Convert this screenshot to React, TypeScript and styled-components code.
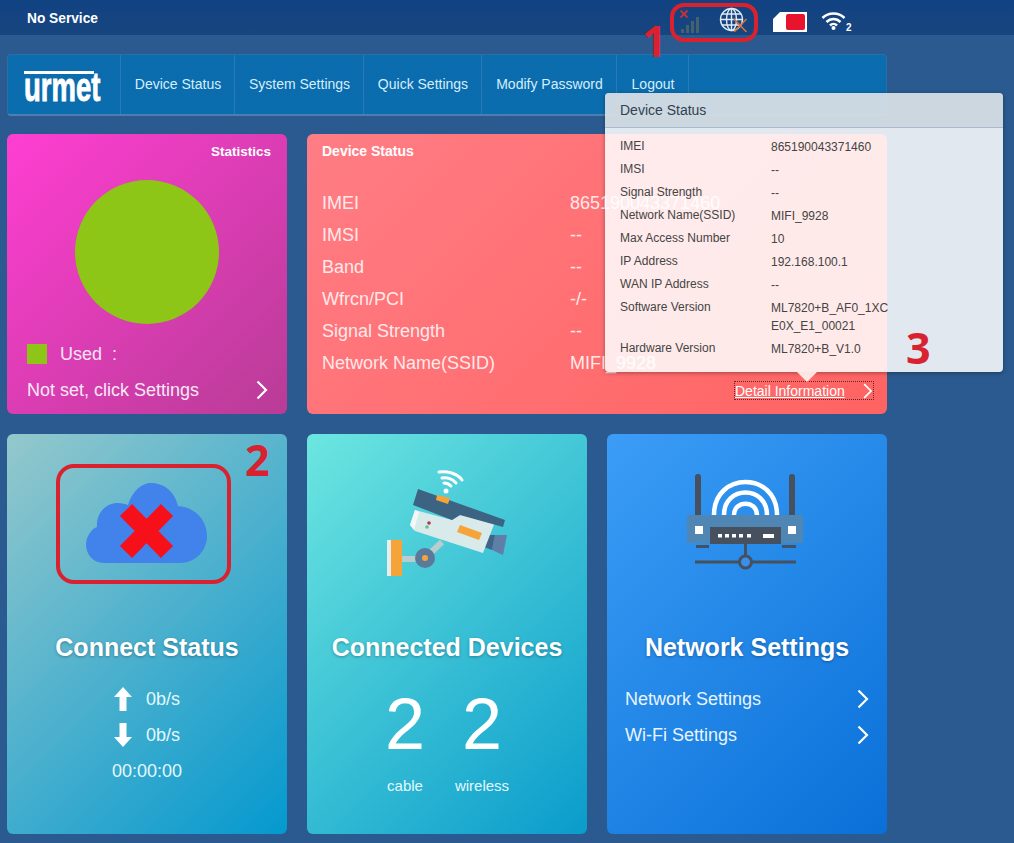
import React from 'react';
import styled, { createGlobalStyle } from 'styled-components';

const GlobalStyle = createGlobalStyle`
  html, body {
    margin: 0;
    padding: 0;
    background: #2a5a90;
    font-family: "Liberation Sans", Arial, sans-serif;
  }
  #root { height: 843px; overflow: hidden; }
`;

const Page = styled.div`
  position: relative;
  width: 1014px;
  height: 843px;
  overflow: hidden;
  background: #2a5a90;
  color: #fff;
`;

// top status bar
const TopBar = styled.div`
  height: 35px;
  display: flex;
  align-items: center;
  padding-left: 27px;
  background: linear-gradient(#114282, #17457f);
`;

const NoService = styled.div`
  width: 653px;
  font-size: 14px;
  font-weight: bold;
  transform: scaleX(0.98);
  transform-origin: left center;
`;

const StatusIcons = styled.div`
  display: flex;
  align-items: center;
`;

const Main = styled.div`
  width: 880px;
  margin-left: 7px;
  padding-top: 19px;
`;

// navigation
const Nav = styled.div`
  height: 62px;
  box-sizing: border-box;
  display: flex;
  background: linear-gradient(#0b6cae, #0a6dae);
  border-radius: 4px;
  border: 1px solid #2a6ea8;
  border-bottom: 2px solid #4c7fae;
`;

const LogoCell = styled.div`
  width: 113px;
  box-sizing: border-box;
  border-right: 1px solid #2a7ab5;
  padding: 15px 0 0 16px;
`;

const Logo = styled.div`
  position: relative;
  color: #fff;
  font-family: "Liberation Sans", sans-serif;
  font-weight: bold;
  font-size: 41px;
  line-height: 30px;
  height: 30px;
  width: 70px;
  white-space: nowrap;
  -webkit-text-stroke: 0.9px #fff;
  &::before {
    content: '';
    position: absolute;
    left: 0;
    right: 0;
    top: 1px;
    height: 3px;
    background: #fff;
  }
  & span {
    display: inline-block;
    padding-top: 2px;
    transform: scaleX(0.67);
    transform-origin: left center;
  }
`;

const NavItem = styled.div<{ $w: number }>`
  width: ${p => p.$w}px;
  box-sizing: border-box;
  display: flex;
  align-items: center;
  justify-content: center;
  font-size: 14px;
  padding: 0 0 1px 1px;
  color: #d4eefb;
  border-right: 1px solid #2a7ab5;
`;

// card grid
const Grid = styled.div`
  margin-top: 18px;
  display: grid;
  grid-template-columns: 280px 280px 280px;
  grid-template-rows: 280px 400px;
  gap: 20px;
`;

const Card = styled.div<{ $from: string; $to: string; $span?: number }>`
  position: relative;
  box-sizing: border-box;
  border-radius: 6px;
  grid-column: span ${p => p.$span ?? 1};
  background: linear-gradient(135deg, ${p => p.$from}, ${p => p.$to});
  display: flex;
  flex-direction: column;
`;

const StatsCard = styled(Card)`
  padding: 10px 0 0 20px;
`;

const CardTitle = styled.div<{ $right?: boolean }>`
  font-size: ${p => (p.$right ? '13.500px' : '14px')};
  font-weight: bold;
  line-height: 15px;
  text-align: ${p => (p.$right ? 'right' : 'left')};
  padding-right: ${p => (p.$right ? '16px' : '0')};
`;

const Donut = styled.div`
  width: 144px;
  height: 144px;
  border-radius: 50%;
  background: #8dc616;
  margin: 21px 0 0 48px;
`;

const UsedRow = styled.div`
  display: flex;
  align-items: center;
  margin-top: 20px;
  font-size: 18px;
  height: 20px;
  color: #f6e6f4;
`;

const Swatch = styled.div`
  width: 20px;
  height: 20px;
  background: #8dc616;
  margin-right: 13px;
`;

const SettingsRow = styled.div`
  display: flex;
  justify-content: space-between;
  align-items: center;
  margin-top: 15px;
  height: 22px;
  padding-right: 19px;
  font-size: 18px;
  color: #f8e8f5;
`;

const DeviceCard = styled(Card)`
  padding: 10px 0 0 15px;
`;

const InfoList = styled.div`
  margin-top: 28px;
  font-size: 18px;
  color: #ffe9e9;
`;

const InfoRow = styled.div`
  display: grid;
  grid-template-columns: 248px 1fr;
  height: 32px;
  line-height: 32px;
`;

const DetailLink = styled.div`
  position: absolute;
  right: 14px;
  bottom: 15px;
  height: 17px;
  width: 138px;
  box-sizing: border-box;
  display: flex;
  justify-content: space-between;
  align-items: center;
  font-size: 14px;
  color: #fff;
  text-decoration: underline;
  outline: 1px dotted #5a2a2a;
`;

const ActionCard = styled(Card)`
  align-items: center;
`;

const IconSlot = styled.div`
  height: 180px;
  width: 100%;
  display: flex;
  justify-content: center;
  align-items: flex-start;
`;

const BigTitle = styled.div`
  font-size: 25px;
  line-height: 28px;
  font-weight: bold;
  margin-top: 19px;
  text-shadow: 0 1px 3px rgba(0, 0, 0, 0.3);
`;

const RateRow = styled.div`
  display: flex;
  align-items: center;
  height: 36px;
  font-size: 18px;
  color: #e4f8fc;
  gap: 14px;
`;

const Rates = styled.div`
  margin-top: 20px;
  display: flex;
  flex-direction: column;
  align-items: center;
`;

const Counts = styled.div`
  margin: 27px 7px 0 0;
  display: flex;
  gap: 27px;
`;

const Count = styled.div`
  width: 50px;
  display: flex;
  flex-direction: column;
  align-items: center;
  font-size: 72px;
  line-height: 72px;
  white-space: nowrap;
`;

const CountLabel = styled.div`
  font-size: 15px;
  line-height: 18px;
  margin-top: 17px;
  color: #e4f8fc;
`;

const LinkList = styled.div`
  align-self: stretch;
  margin-top: 20px;
  padding: 0 18px;
`;

const LinkRow = styled.div`
  display: flex;
  justify-content: space-between;
  align-items: center;
  height: 36px;
  font-size: 18px;
  color: #e8f4fe;
`;

// floating popover
const Popover = styled.div`
  position: absolute;
  left: 605px;
  top: 93px;
  width: 398px;
  height: 279px;
  border-radius: 4px;
  background: rgba(255, 255, 255, 0.86);
  box-shadow: 0 1px 4px rgba(0, 0, 0, 0.35);
  color: #444;
  font-size: 12px;
  &::after {
    content: '';
    position: absolute;
    left: 192px;
    bottom: -10px;
    border-left: 10px solid transparent;
    border-right: 10px solid transparent;
    border-top: 10px solid rgba(255, 236, 235, 0.95);
  }
`;

const PopHeader = styled.div`
  height: 34px;
  padding-left: 15px;
  font-size: 14px;
  line-height: 34px;
  color: #33414f;
  background: rgba(190, 200, 212, 0.55);
  border-bottom: 1px solid #a9bad0;
  border-radius: 4px 4px 0 0;
`;

const PopBody = styled.div`
  padding: 7px 0 0 15px;
`;

const PopRow = styled.div`
  display: grid;
  grid-template-columns: 151px 120px;
  min-height: 23px;
  line-height: 23px;
`;

const PopValue = styled.div`
  line-height: 18px;
  padding: 2.5px 0;
  white-space: pre;
`;

// red annotations drawn over the screenshot
const MarkBox = styled.div<{ $x: number; $y: number; $w: number; $h: number; $r: number }>`
  position: absolute;
  left: ${p => p.$x}px;
  top: ${p => p.$y}px;
  width: ${p => p.$w}px;
  height: ${p => p.$h}px;
  box-sizing: border-box;
  border: 4px solid #d8222f;
  border-radius: ${p => p.$r}px;
`;

const MarkNumber = styled.div<{ $x: number; $y: number }>`
  position: absolute;
  left: ${p => p.$x}px;
  top: ${p => p.$y}px;
  font-family: "Open Sans", sans-serif;
  font-weight: bold;
  font-size: 43px;
  line-height: 44px;
  color: #d8222f;
`;

const Chevron = ({ size = 20 }: { size?: number }) => (
  <svg width={size * 0.6} height={size} viewBox="0 0 12 20">
    <path d="M1.500 1.500 10 10l-8.500 8.500" fill="none" stroke="#fff" strokeWidth="2.200" />
  </svg>
);

const SignalIcon = () => (
  <svg width="24" height="30" viewBox="0 0 24 30" style={{ marginRight: 14 }}>
    <path d="M0.500 7.500l7 7M7.500 7.500l-7 7" stroke="#c8303a" strokeWidth="1.800" />
    <g fill="#43626c">
      <rect x="1" y="26" width="3" height="4" />
      <rect x="6" y="22" width="3" height="8" />
      <rect x="11" y="18" width="3" height="12" />
      <rect x="16" y="14" width="3" height="16" />
    </g>
  </svg>
);

const GlobeIcon = () => (
  <svg width="34" height="28" viewBox="0 0 34 28" style={{ marginRight: 20 }}>
    <g fill="none" stroke="#dfeaf5" strokeWidth="1.400">
      <circle cx="13.500" cy="15.500" r="11" />
      <ellipse cx="13.500" cy="15.500" rx="5" ry="11" />
      <path d="M13.500 4.500v22M2.500 15.500h22M4 10h19M4 21h19" />
    </g>
    <path d="M16 15l12.500 13M28.500 15L16 28" stroke="#d8703a" strokeWidth="1.600" />
  </svg>
);

const SimIcon = () => (
  <svg width="36" height="22" viewBox="0 0 36 22" style={{ marginRight: 13, marginTop: 8 }}>
    <path d="M8 1h27v20H1V8z" fill="#fff" />
    <rect x="14" y="3" width="19" height="16" rx="2" fill="#e8142e" />
  </svg>
);

const WifiIcon = () => (
  <svg width="34" height="26" viewBox="0 0 34 26">
    <g fill="none" stroke="#fff" strokeWidth="2.500" transform="translate(0 4)">
      <path d="M1.500 9c6-6 16-6 22 0" />
      <path d="M5.500 13c4-4 10-4 14 0" />
      <path d="M9 16.500c2-2 5-2 7 0" />
    </g>
    <circle cx="12.500" cy="23" r="2" fill="#fff" />
    <text x="25" y="25.500" fontSize="10" fontWeight="bold" fill="#fff" fontFamily="Liberation Sans">2</text>
  </svg>
);

const CloudIcon = () => (
  <svg width="122" height="82" viewBox="0 0 122 82" style={{ marginTop: 49 }}>
    <path
      d="M18 80C7 80 0 71 0 62c0-10 7-17 11-18C10 30 20 20 32 20c4 0 7 1 10 2C46 8 56 0 65 0c13 0 24 9 27 23 17 1 29 14 29 30 0 15-12 27-27 27z"
      fill="#4183ea"
    />
    <path d="M40 27L81 69M81 27L40 69" stroke="#f6101a" strokeWidth="17" fill="none" />
  </svg>
);

const CameraIcon = () => (
  <svg width="124" height="116" viewBox="0 0 124 116" style={{ marginTop: 33 }}>
    <g fill="none" stroke="#fff" strokeWidth="3" strokeLinecap="round">
      <path d="M54 5c8-1 18 1 23 8" />
      <path d="M57 11c5-1 11 1 14 5" />
      <path d="M59 16c2 0 5 1 7 3" />
    </g>
    <circle cx="61" cy="24" r="2.500" fill="#fff" />
    <path d="M40 91L57 75" stroke="#b9ccd0" strokeWidth="6" />
    <path d="M16 92h24" stroke="#b9ccd0" strokeWidth="6" />
    <circle cx="40" cy="91" r="10" fill="#5a7a9c" />
    <circle cx="40" cy="91" r="3" fill="#f6a43a" />
    <rect x="2" y="73" width="15" height="36" fill="#f6a43a" />
    <rect x="2" y="73" width="4" height="36" fill="#e8eef0" />
    <path d="M110 68h12l-4 20-11-5z" fill="#5f7fa8" />
    <path d="M102 68l8 0-3 15-8-3z" fill="#3f6488" />
    <path d="M30 43L25 58l5 6 68 22 12-31-35-7-8 5z" fill="#d9eaea" />
    <path d="M30 43l-5 15 4 5 5-18z" fill="#f2f8f8" />
    <path d="M33 22l87 31-2 7-43-12-8 5-39-15z" fill="#3d6382" />
    <path d="M52 28l13 3-2 6-12-4z" fill="#f6a43a" />
    <path d="M75 58l22 8-3 7-22-8z" fill="#f6a43a" />
    <circle cx="44" cy="56" r="1.800" fill="#b8324a" />
    <circle cx="42" cy="60" r="1.800" fill="#5fc48c" />
  </svg>
);

const RouterIcon = () => (
  <svg width="118" height="96" viewBox="0 0 118 96" style={{ marginTop: 40, marginRight: 3 }}>
    <rect x="8" y="0" width="6" height="44" rx="3" fill="#46505e" />
    <rect x="102" y="0" width="6" height="44" rx="3" fill="#46505e" />
    <g fill="none" stroke="#fff" strokeWidth="4.500">
      <path d="M27 41c0-44 63-44 63 0" />
      <path d="M37 41c0-30 43-30 43 0" />
      <path d="M47 41c0-15 23-15 23 0" />
    </g>
    <rect x="0" y="41" width="116" height="28" fill="#4f86b4" />
    <rect x="8" y="52" width="8" height="8" fill="#fff" />
    <rect x="101" y="52" width="8" height="8" fill="#fff" />
    <rect x="23" y="53" width="71" height="17" fill="#46505e" />
    <g fill="#fff">
      <rect x="31" y="60" width="4" height="3.500" />
      <rect x="38" y="60" width="4" height="3.500" />
      <rect x="45" y="60" width="4" height="3.500" />
      <rect x="52" y="60" width="4" height="3.500" />
      <rect x="60" y="60" width="4" height="3.500" />
      <rect x="76" y="60" width="11" height="4" />
    </g>
    <rect x="9" y="71" width="13" height="3" fill="#46505e" />
    <rect x="95" y="71" width="14" height="3" fill="#46505e" />
    <path d="M58.500 69v13M8 88h101" stroke="#46505e" strokeWidth="3" />
    <circle cx="58.500" cy="88" r="6" fill="#3a8fe8" stroke="#46505e" strokeWidth="3" />
  </svg>
);

const Arrow = ({ down }: { down?: boolean }) => (
  <svg width="18" height="24" viewBox="0 0 18 24" style={down ? { transform: 'rotate(180deg)' } : undefined}>
    <path d="M9 0l9 10h-5.500v14h-7V10H0z" fill="#fff" />
  </svg>
);

const deviceRows = [
  ['IMEI', '865190043371460'],
  ['IMSI', '--'],
  ['Band', '--'],
  ['Wfrcn/PCI', '-/-'],
  ['Signal Strength', '--'],
  ['Network Name(SSID)', 'MIFI_9928'],
];

const popRows = [
  ['IMEI', '865190043371460'],
  ['IMSI', '--'],
  ['Signal Strength', '--'],
  ['Network Name(SSID)', 'MIFI_9928'],
  ['Max Access Number', '10'],
  ['IP Address', '192.168.100.1'],
  ['WAN IP Address', '--'],
  ['Software Version', 'ML7820+B_AF0_1XC\nE0X_E1_00021'],
  ['Hardware Version', 'ML7820+B_V1.0'],
];

const navItems: [string, number][] = [
  ['Device Status', 114],
  ['System Settings', 129],
  ['Quick Settings', 118],
  ['Modify Password', 135],
  ['Logout', 72],
];

const App = () => (
  <Page>
    <GlobalStyle />
    <TopBar>
      <NoService>No Service</NoService>
      <StatusIcons>
        <SignalIcon />
        <GlobeIcon />
        <SimIcon />
        <WifiIcon />
      </StatusIcons>
    </TopBar>
    <Main>
      <Nav>
        <LogoCell>
          <Logo><span>urmet</span></Logo>
        </LogoCell>
        {navItems.map(([label, w]) => (
          <NavItem key={label} $w={w}>{label}</NavItem>
        ))}
      </Nav>
      <Grid>
        <StatsCard $from="#ff3ed2" $to="#b83c96">
          <CardTitle $right>Statistics</CardTitle>
          <Donut />
          <UsedRow><Swatch />Used&nbsp;&nbsp;:</UsedRow>
          <SettingsRow>Not set, click Settings<Chevron /></SettingsRow>
        </StatsCard>
        <DeviceCard $from="#ff7d85" $to="#ff6362" $span={2}>
          <CardTitle>Device Status</CardTitle>
          <InfoList>
            {deviceRows.map(([k, v]) => (
              <InfoRow key={k}><div>{k}</div><div>{v}</div></InfoRow>
            ))}
          </InfoList>
          <DetailLink>Detail Information<Chevron size={16} /></DetailLink>
        </DeviceCard>
        <ActionCard $from="#94c8cc" $to="#0499cf">
          <IconSlot><CloudIcon /></IconSlot>
          <BigTitle>Connect Status</BigTitle>
          <Rates>
            <RateRow><Arrow />0b/s</RateRow>
            <RateRow><Arrow down />0b/s</RateRow>
            <RateRow>00:00:00</RateRow>
          </Rates>
        </ActionCard>
        <ActionCard $from="#6ce6e0" $to="#0a9ccb">
          <IconSlot><CameraIcon /></IconSlot>
          <BigTitle>Connected Devices</BigTitle>
          <Counts>
            <Count>2<CountLabel>cable</CountLabel></Count>
            <Count>2<CountLabel>wireless</CountLabel></Count>
          </Counts>
        </ActionCard>
        <ActionCard $from="#3b9df6" $to="#0a70d8">
          <IconSlot><RouterIcon /></IconSlot>
          <BigTitle>Network Settings</BigTitle>
          <LinkList>
            <LinkRow>Network Settings<Chevron /></LinkRow>
            <LinkRow>Wi-Fi Settings<Chevron /></LinkRow>
          </LinkList>
        </ActionCard>
      </Grid>
    </Main>
    <Popover>
      <PopHeader>Device Status</PopHeader>
      <PopBody>
        {popRows.map(([k, v]) => (
          <PopRow key={k}><div>{k}</div><PopValue>{v}</PopValue></PopRow>
        ))}
      </PopBody>
    </Popover>
    <MarkBox $x={670} $y={3} $w={88} $h={39} $r={14} />
    <MarkBox $x={56} $y={464} $w={175} $h={120} $r={18} />
    <MarkNumber $x={642} $y={19}>1</MarkNumber>
    <MarkNumber $x={245} $y={438}>2</MarkNumber>
    <MarkNumber $x={906} $y={326}>3</MarkNumber>
  </Page>
);

export default App;
